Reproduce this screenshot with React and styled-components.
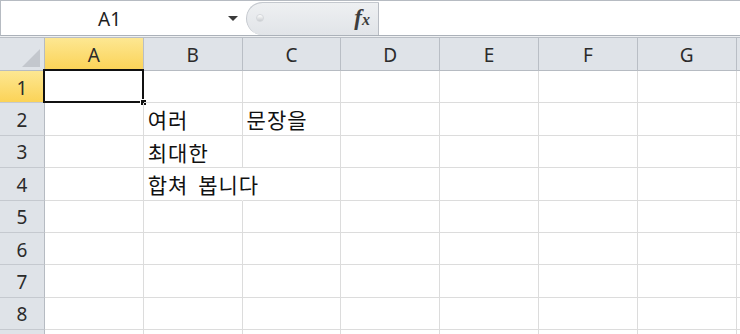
import React from "react";
import styled, { createGlobalStyle } from "styled-components";

const COLS = ["A", "B", "C", "D", "E", "F", "G"];
const ROWS = [1, 2, 3, 4, 5, 6, 7, 8, null];
const COL_W = 98.8;
const ROW_H = 32.4;

const cells = {
  "B2": "여러",
  "C2": "문장을",
  "B3": "최대한",
  "B4": "합쳐 봅니다",
};

const GlobalStyle = createGlobalStyle`
  html, body {
    margin: 0;
    padding: 0;
    background: #ffffff;
    overflow: hidden;
  }
  body {
    font-family: "Noto Sans", "Noto Sans CJK KR", sans-serif;
  }
`;

const Sheet = styled.div`
  width: 740px;
  height: 334px;
  overflow: hidden;
  background: #ffffff;
`;

const FormulaBar = styled.div`
  display: flex;
  height: 34px;
  border-top: 1px solid #b6bbc2;
  border-left: 1px solid #b6bbc2;
  border-bottom: 1px solid #abb1b9;
  background: #ffffff;
`;

const NameBox = styled.div`
  width: 245px;
  display: flex;
  align-items: center;
`;

const NameText = styled.span`
  flex: 1;
  text-align: center;
  font-size: 19px;
  color: #1e1e1e;
  padding-right: 10px;
  padding-top: 1px;
`;

const DropArrow = styled.span`
  width: 0;
  height: 0;
  border-left: 5px solid transparent;
  border-right: 5px solid transparent;
  border-top: 5px solid #3a3a3a;
  margin-right: 8px;
  margin-top: 1px;
`;

const Pill = styled.div`
  width: 133px;
  margin-top: 1px;
  display: flex;
  align-items: center;
  justify-content: space-between;
  padding: 0 8px 0 9px;
  box-sizing: border-box;
  background: linear-gradient(#eef0f2, #e1e4e8);
  border: 1px solid #c4c8ce;
  border-right: 1px solid #b8bcc3;
  border-bottom: none;
  border-radius: 17px 0 0 17px;
`;

const Knob = styled.span`
  width: 6px;
  height: 6px;
  border-radius: 50%;
  background: linear-gradient(#ffffff, #c9ccd0);
  border: 1px solid #d5d8dc;
  margin-top: -3px;
`;

const FxLabel = styled.span`
  font-family: "Liberation Serif", serif;
  font-style: italic;
  font-weight: bold;
  font-size: 23px;
  color: #3d3d3d;
  margin-top: -3px;
  & small {
    font-size: 16px;
  }
`;

const FormulaInput = styled.div`
  flex: 1;
  background: #ffffff;
`;

const Gap = styled.div`
  height: 1px;
  background: #eef0f2;
  border-bottom: 1px solid #b9bec5;
`;

const Grid = styled.div`
  display: grid;
  grid-template-columns: 45px repeat(${COLS.length}, ${COL_W}px) 1fr;
  grid-template-rows: 33px repeat(${ROWS.length}, ${ROW_H}px);
`;

const Corner = styled.div`
  position: relative;
  background: #dfe3e8;
  border-right: 1px solid #b6bbc2;
  border-bottom: 1px solid #b6bbc2;
  &::after {
    content: "";
    position: absolute;
    right: 4px;
    bottom: 3px;
    width: 0;
    height: 0;
    border-left: 18px solid transparent;
    border-bottom: 18px solid #c3c7cd;
  }
`;

const ColHead = styled.div`
  display: flex;
  align-items: center;
  justify-content: center;
  font-size: 19px;
  color: #2b2b2b;
  background: ${(p) =>
    p.$active ? "linear-gradient(#fde792, #fbd357)" : "#dfe3e8"};
  border-right: 1px solid #b9bec5;
  border-bottom: 1px solid #b6bbc2;
  padding-top: 2px;
`;

const RowHead = styled.div`
  display: flex;
  align-items: center;
  justify-content: center;
  font-size: 19px;
  color: #2b2b2b;
  background: ${(p) =>
    p.$active ? "linear-gradient(#fde792, #fbd357)" : "#dfe3e8"};
  border-right: 1px solid #b6bbc2;
  border-bottom: 1px solid #c5c9cf;
  padding-top: 2px;
`;

const Cell = styled.div`
  position: relative;
  border-right: 1px solid #dcdcdc;
  border-bottom: 1px solid #dcdcdc;
  font-family: "Noto Sans CJK KR", "Noto Sans", sans-serif;
  font-size: 21px;
  line-height: 28px;
  letter-spacing: 1px;
  word-spacing: 4px;
  color: #111111;
  white-space: nowrap;
  overflow: visible;
  padding: 2px 0 0 4px;
  box-sizing: border-box;
  z-index: ${(p) => (p.$text ? 1 : 0)};
  ${(p) => (p.$hideRight ? "border-right-color: transparent;" : "")}
`;

const Selection = styled.div`
  position: absolute;
  left: -2px;
  top: -2px;
  right: -1px;
  bottom: -1px;
  border: 2px solid #111111;
  z-index: 2;
  &::after {
    content: "";
    position: absolute;
    right: -5px;
    bottom: -5px;
    width: 5px;
    height: 5px;
    background: #111111;
    border: 1px solid #ffffff;
  }
`;

export default function App() {
  return (
    <Sheet>
      <GlobalStyle />
      <FormulaBar>
        <NameBox>
          <NameText>A1</NameText>
          <DropArrow />
        </NameBox>
        <Pill>
          <Knob />
          <FxLabel>
            f<small>x</small>
          </FxLabel>
        </Pill>
        <FormulaInput />
      </FormulaBar>
      <Gap />
      <Grid>
        <Corner />
        {COLS.map((c) => (
          <ColHead key={c} $active={c === "A"}>
            {c}
          </ColHead>
        ))}
        <ColHead />
        {ROWS.map((r, i) => (
          <React.Fragment key={i}>
            <RowHead $active={r === 1}>{r}</RowHead>
            {COLS.map((c) => {
              const id = c + r;
              const text = cells[id];
              return (
                <Cell key={id} $text={!!text} $hideRight={id === "B4"}>
                  {text}
                  {id === "A1" && <Selection />}
                </Cell>
              );
            })}
            <Cell />
          </React.Fragment>
        ))}
      </Grid>
    </Sheet>
  );
}
